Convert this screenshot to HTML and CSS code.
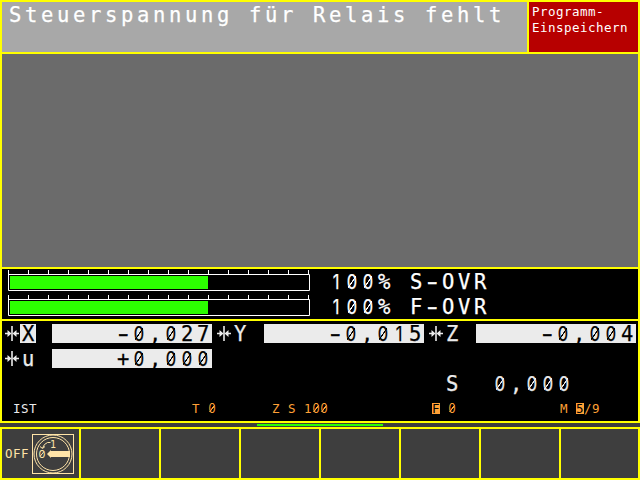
FILE: index.html
```html
<!DOCTYPE html>
<html lang="de">
<head>
<meta charset="utf-8">
<title>Programm-Einspeichern</title>
<link rel="stylesheet" href="styles.css">
</head>
<body>
<svg width="0" height="0" class="defs" aria-hidden="true">
  <symbol id="axis" viewBox="0 0 14 15">
    <path d="M6.500 0V15M7.500 0V15" stroke="currentColor" stroke-width=".8" fill="none"/>
    <path d="M0 7.500H5M9 7.500H14" stroke="currentColor" stroke-width="1.600" fill="none"/>
    <path d="M2.500 4L6.500 7.500L2.500 11ZM11.500 4L7.500 7.500L11.500 11Z" fill="currentColor"/>
  </symbol>
  <symbol id="scale" viewBox="0 0 302 21">
    <path d="M.5 0V20.5H301.5V4.5H.5M20.5 0V4M40.5 0V4M60.5 0V4M80.5 0V4M100.5 0V4M120.5 0V4M140.5 0V4M160.5 0V4M180.5 0V4M200.5 0V4M220.5 0V4M240.5 0V4M260.5 0V4M280.5 0V4M300.5 0V4" fill="none" stroke="#fff"/>
    <rect x="2" y="6" width="198" height="13" fill="#2cff00"/>
  </symbol>
</svg>
<main class="screen">
  <header class="head">
    <div class="message big">Steuerspannung für Relais fehlt</div>
    <div class="mode small">Programm-<br>Einspeichern</div>
  </header>
  <section class="program"></section>
  <section class="override">
    <div class="ovr"><svg class="scale"><use href="#scale"/></svg><span class="big"><b class="one">1</b><b>0</b><b>0</b>% S<i>-</i>OVR</span></div>
    <div class="ovr"><svg class="scale"><use href="#scale"/></svg><span class="big"><b class="one">1</b><b>0</b><b>0</b>% F<i>-</i>OVR</span></div>
  </section>
  <section class="position">
    <div class="axes">
      <div class="axis"><svg class="mark"><use href="#axis"/></svg><span class="name big active">X</span><span class="value big"><i>-</i><b>0</b>,<b>0</b>27</span></div>
      <div class="axis"><svg class="mark"><use href="#axis"/></svg><span class="name big">Y</span><span class="value big"><i>-</i><b>0</b>,<b>0</b><b class="one">1</b>5</span></div>
      <div class="axis"><svg class="mark"><use href="#axis"/></svg><span class="name big">Z</span><span class="value big"><i>-</i><b>0</b>,<b>0</b><b>0</b>4</span></div>
      <div class="axis"><svg class="mark"><use href="#axis"/></svg><span class="name big">u</span><span class="value big">+<b>0</b>,<b>0</b><b>0</b><b>0</b></span></div>
    </div>
    <div class="spindle big">S  <b>0</b>,<b>0</b><b>0</b><b>0</b></div>
    <div class="status small">
      <span class="ist">IST</span>
      <span>T <b>0</b></span>
      <span>Z S 1<b>0</b><b>0</b></span>
      <span><mark>F</mark> <b>0</b></span>
      <span>M <mark>5</mark>/9</span>
    </div>
  </section>
  <div class="strip"><div class="page"></div></div>
  <nav class="keys">
    <div class="key small"><span>OFF</span>
      <svg class="dial" viewBox="0 0 42 40">
        <g fill="none" stroke="currentColor">
          <rect x=".5" y=".5" width="41" height="39"/>
          <circle cx="21" cy="20" r="19"/>
          <circle cx="21" cy="20" r="16.5"/>
          <path d="M18.500 8.500H15.500L12.500 10.500L10.500 14M8 12.500L10.500 14.500L13 12.500M8 22.500L12 17.500"/>
        </g>
        <path d="M15 20L19 16V17H38V23H19V24Z" fill="currentColor"/>
        <text x="18" y="13.500" class="t1">1</text>
        <text x="6.500" y="24" class="t0">0</text>
      </svg>
    </div>
    <div class="key"></div><div class="key"></div><div class="key"></div><div class="key"></div><div class="key"></div><div class="key"></div><div class="key"></div>
  </nav>
</main>
</body>
</html>
```
FILE: styles.css
```css
* { box-sizing: border-box; }
body { margin: 0; background: #3e3e3e; }
.defs { display: none; }
.screen {
  width: 640px; height: 480px; overflow: hidden;
  display: grid; grid-template-columns: 640px; grid-template-rows: 54px 215px 52px 102px 4px 53px;
  font-family: "DejaVu Sans Mono", "Liberation Mono", monospace;
  font-variant-ligatures: none;
}
svg { display: block; flex: none; }
.big { font-size: 20.5px; letter-spacing: 3.66px; line-height: 19px; white-space: pre; -webkit-text-stroke: .25px currentColor; }
.small { font-size: 12.5px; letter-spacing: .475px; line-height: 16px; }
/* slashed zero: a diagonal stroke behind the digit */
b {
  display: inline-block; font-family: Inter, sans-serif; font-weight: 400;
  letter-spacing: 0; text-align: center; line-height: 1;
  background: linear-gradient(to bottom right, transparent calc(50% - .85px), currentColor calc(50% - .45px), currentColor calc(50% + .45px), transparent calc(50% + .85px)) center / .5em .58em no-repeat;
}
b.one { background: none; }
i { display: inline-block; width: 12.34px; margin-right: 3.66px; letter-spacing: 0; font-style: normal; transform: scaleX(1.5); -webkit-text-stroke: .5px currentColor; }
.big b { width: 16px; transform: translateX(-2px) scaleX(.8); }
.small b { width: 8px; transform: scaleX(.9); }
.head {
  display: grid; grid-template-columns: 525px 109px; gap: 2px;
  background: #ff0; border: 2px solid #ff0;
}
.message { background: #a8a8a8; color: #fff; padding: 4px 0 0 7px; }
.mode { background: #b70000; color: #fff; padding: 2px 0 0 3px; }
.program { background: #6b6b6b; border: solid #ff0; border-width: 0 2px 2px; }
.override { background: #000; border: solid #ff0; border-width: 0 2px 2px; color: #fff; padding: 1px 0 0 6px; }
.ovr { display: flex; height: 25px; gap: 20px; }
.scale { width: 302px; height: 21px; }
.ovr .big { padding: 2px 0 0; }
.position { background: #000; border: solid #ff0; border-width: 0 2px 2px; color: #ebebeb; padding-top: 3px; }
.axes { display: grid; grid-template-columns: 212px 212px 212px; grid-auto-rows: 19px; row-gap: 6px; padding-left: 2px; }
.axis { display: flex; }
.mark { width: 14px; height: 15px; margin: 2px 1px 0 1px; }
.name { width: 16px; padding: 1px 0 0 2px; height: 19px; }
.value { width: 160px; height: 19px; margin-left: 16px; padding-left: 65px; background: #ebebeb; color: #000; }
.active { background: #ebebeb; color: #000; }
.spindle { margin: 6px 0 0 444px; }
.status {
  display: grid; grid-template-columns: 180px 80px 160px 128px 60px;
  height: 16px; margin: 6px 0 0 10px; color: #ffa036; white-space: nowrap;
}
.ist { color: #ebebeb; padding-left: 1px; }
mark { display: inline-block; width: 8px; height: 11px; line-height: 11px; background: #ffa036; color: #000; letter-spacing: 0; }
.strip { background: #3e3e3e; padding-top: 1px; }
.page { width: 126px; height: 2px; margin-left: 257px; background: #2cff00; }
.keys { display: grid; grid-template-columns: 77px repeat(6, 78px) 77px; gap: 2px; background: #ff0; padding: 2px; }
.key { background: #3e3e3e; color: #ffe4a8; display: flex; align-items: center; padding-left: 3px; }
.dial { width: 42px; height: 40px; margin-left: 3px; }
.dial text { fill: currentColor; letter-spacing: 0; font-size: 10px; }
.dial .t0 { font-family: Inter, sans-serif; font-size: 11px; }
```
